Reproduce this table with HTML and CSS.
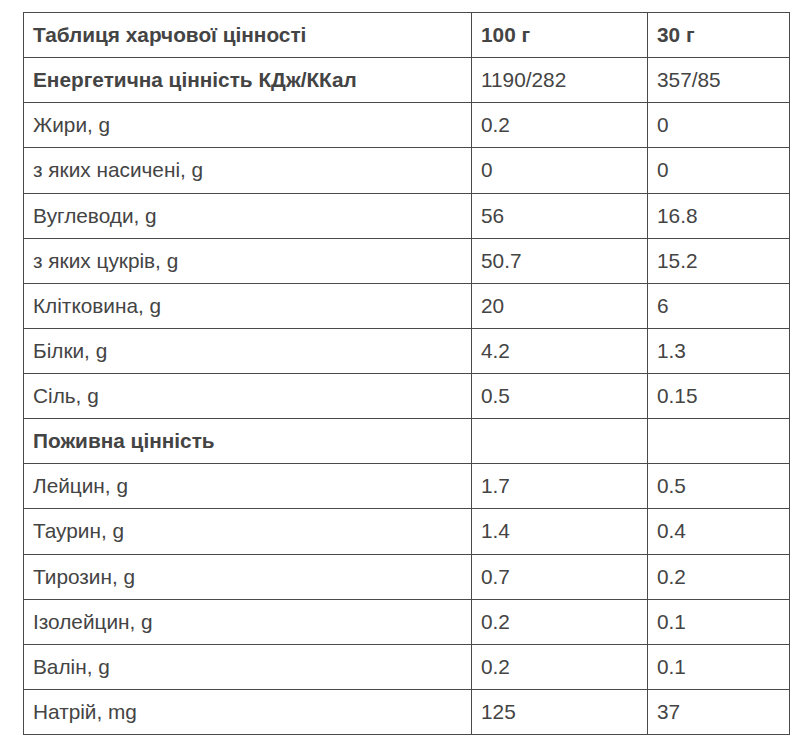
FILE: index.html
```html
<!DOCTYPE html>
<html lang="uk">
<head>
<meta charset="utf-8">
<link rel="stylesheet" href="styles.css">
</head>
<body>
<table class="nutri">
  <colgroup>
    <col class="c1"><col class="c2"><col class="c3">
  </colgroup>
  <tbody>
    <tr class="b"><td>Таблиця харчової цінності</td><td>100 г</td><td>30 г</td></tr>
    <tr><td class="b">Енергетична цінність КДж/ККал</td><td>1190/282</td><td>357/85</td></tr>
    <tr><td>Жири, g</td><td>0.2</td><td>0</td></tr>
    <tr><td>з яких насичені, g</td><td>0</td><td>0</td></tr>
    <tr><td>Вуглеводи, g</td><td>56</td><td>16.8</td></tr>
    <tr><td>з яких цукрів, g</td><td>50.7</td><td>15.2</td></tr>
    <tr><td>Клітковина, g</td><td>20</td><td>6</td></tr>
    <tr><td>Білки, g</td><td>4.2</td><td>1.3</td></tr>
    <tr><td>Сіль, g</td><td>0.5</td><td>0.15</td></tr>
    <tr><td class="b">Поживна цінність</td><td></td><td></td></tr>
    <tr><td>Лейцин, g</td><td>1.7</td><td>0.5</td></tr>
    <tr><td>Таурин, g</td><td>1.4</td><td>0.4</td></tr>
    <tr><td>Тирозин, g</td><td>0.7</td><td>0.2</td></tr>
    <tr><td>Ізолейцин, g</td><td>0.2</td><td>0.1</td></tr>
    <tr><td>Валін, g</td><td>0.2</td><td>0.1</td></tr>
    <tr><td>Натрій, mg</td><td>125</td><td>37</td></tr>
  </tbody>
</table>
</body>
</html>
```
FILE: styles.css
```css
html, body {
  margin: 0;
  padding: 0;
  background: #fff;
}
body {
  padding: 12px 0 0 23px;
  font-family: "Liberation Sans", Arial, sans-serif;
  color: #444;
}
.nutri {
  border-collapse: collapse;
  table-layout: fixed;
  width: 766px;
  font-size: 20.8px;
  line-height: 30px;
}
.c1 { width: 448px; }
.c2 { width: 176px; }
.c3 { width: 142px; }
.nutri td {
  border: 1px solid #4a4a4a;
  padding: 7px 9px;
  height: 30.125px;
  vertical-align: middle;
  text-align: left;
}
.b, .b td {
  font-weight: bold;
}
```
